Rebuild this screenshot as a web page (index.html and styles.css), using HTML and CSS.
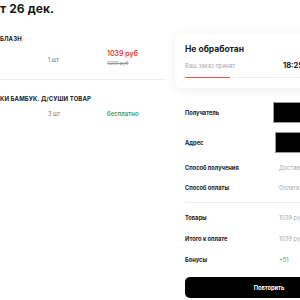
FILE: index.html
```html
<!DOCTYPE html>
<html>
<head>
  <title>Заказ</title>
  <meta charset="UTF-8">
  <link rel="stylesheet" href="styles.css">
</head>
<body>
  <div class="page">
    <div class="order">
      <h1 class="title">т 26 дек.</h1>

      <div class="item">
        <div class="item-name">БЛАЗН</div>
        <div class="item-row">
          <span class="qty">1 шт</span>
          <div class="price">
            <span class="price-now">1039 руб</span>
            <span class="price-old">1299 руб</span>
          </div>
        </div>
      </div>

      <div class="item">
        <div class="item-name">КИ БАМБУК. Д/СУШИ ТОВАР</div>
        <div class="item-row">
          <span class="qty">3 шт</span>
          <div class="price">
            <span class="price-free">бесплатно</span>
          </div>
        </div>
      </div>
    </div>

    <div class="side">
      <div class="card status-card">
        <div class="status-title">Не обработан</div>
        <div class="status-row">
          <span class="status-text">Ваш заказ принят</span>
          <span class="status-time">18:25</span>
        </div>
        <div class="progress"><div class="progress-fill" style="width: 45px"></div></div>
      </div>

      <div class="card info-card">
        <div class="info-row tall">
          <span class="label">Получатель</span>
          <span class="masked"></span>
        </div>
        <div class="info-row tall">
          <span class="label">Адрес</span>
          <span class="masked shift"></span>
        </div>
        <div class="info-row">
          <span class="label">Способ получения</span>
          <span class="value">Доставка</span>
        </div>
        <div class="info-row">
          <span class="label">Способ оплаты</span>
          <span class="value">Оплата</span>
        </div>
        <div class="divider"></div>
        <div class="info-row">
          <span class="label">Товары</span>
          <span class="value">1039 руб</span>
        </div>
        <div class="info-row">
          <span class="label">Итого к оплате</span>
          <span class="value">1039 руб</span>
        </div>
        <div class="info-row">
          <span class="label">Бонусы</span>
          <span class="value bonus">+51</span>
        </div>
        <button class="repeat-btn">Повторить</button>
      </div>
    </div>
  </div>
</body>
</html>
```

FILE: styles.css
```css
html, body {
  margin: 0;
  padding: 0;
  overflow: hidden;
  background: #fff;
}
body {
  font-family: Inter, "Noto Sans", sans-serif;
  color: #1a1a1a;
}
.page {
  display: grid;
  grid-template-columns: 166px 178px;
  column-gap: 9px;
  width: 400px;
}
.title {
  margin: 2px 0 0;
  font-size: 12px;
  line-height: 14px;
  font-weight: 700;
  letter-spacing: 0.1px;
}
.item {
  padding-top: 19px;
}
.item + .item {
  border-top: 1px solid #f0f0f0;
  margin-top: 11px;
  padding-top: 15px;
}
.item-name {
  font-size: 6px;
  font-weight: 700;
  line-height: 8px;
  letter-spacing: 0.1px;
}
.item-row {
  display: flex;
  align-items: flex-start;
  margin-top: 6px;
}
.qty {
  font-size: 5.5px;
  line-height: 8px;
  color: #777;
  width: 59px;
  margin-left: 48px;
  padding-top: 7px;
}
.item + .item .qty {
  padding-top: 1px;
}
.price {
  display: flex;
  flex-direction: column;
}
.price-now {
  font-size: 7px;
  font-weight: 600;
  color: #e5372b;
  line-height: 10px;
}
.price-old {
  font-size: 5px;
  color: #999;
  text-decoration: line-through;
  line-height: 9px;
}
.price-free {
  font-size: 6px;
  font-weight: 600;
  color: #3f9a5e;
  line-height: 8px;
  padding-top: 1px;
}
.side {
  padding-top: 33px;
}
.card {
  background: #fff;
  border-radius: 6px;
  padding: 0 0 0 10px;
}
.status-card {
  height: 55px;
  padding-top: 10px;
  box-sizing: border-box;
  box-shadow: 0 2px 10px rgba(0, 0, 0, 0.07);
}
.status-title {
  font-size: 8.5px;
  font-weight: 700;
  line-height: 12px;
}
.status-row {
  display: flex;
  align-items: center;
  height: 11px;
  margin-top: 5px;
}
.status-text {
  width: 98px;
  font-size: 5.8px;
  color: #aaa;
}
.status-time {
  font-size: 7.5px;
  font-weight: 700;
}
.progress {
  height: 1px;
  background: #ececec;
  margin-top: 6px;
}
.progress-fill {
  height: 1px;
  background: #e5584d;
}
.info-card {
  margin-top: 9px;
  padding-bottom: 10px;
}
.info-row {
  display: flex;
  align-items: center;
  height: 20px;
}
.info-row.tall {
  height: 30px;
}
.divider ~ .info-row {
  height: 21px;
}
.label {
  width: 94px;
  font-size: 5.7px;
  font-weight: 700;
  color: #222;
}
.value {
  font-size: 5.7px;
  color: #aaa;
}
.value.bonus {
  color: #3f9a5e;
}
.masked {
  width: 60px;
  height: 19px;
  background: #000;
  border: 1px solid #999;
  margin-left: -6px;
}
.masked.shift {
  margin-left: -4px;
}
.divider {
  height: 1px;
  background: #f0f0f0;
  margin: 5px 0 4px;
}
.repeat-btn {
  width: 168px;
  height: 21px;
  margin-top: 7px;
  background: #000;
  color: #fff;
  border: none;
  border-radius: 5px;
  font-family: Inter, "Noto Sans", sans-serif;
  font-size: 5.7px;
  font-weight: 700;
}
```
